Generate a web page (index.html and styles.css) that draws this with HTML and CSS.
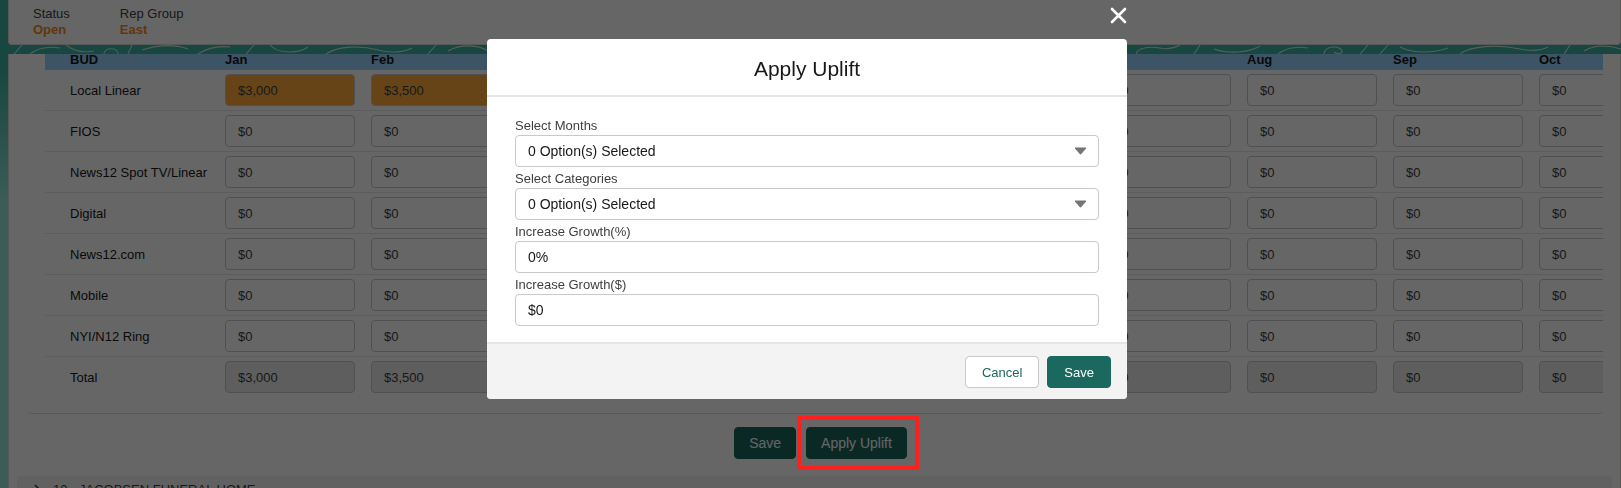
FILE: index.html
```html
<!DOCTYPE html>
<html>
    <head>
        <meta charset="utf-8">
        <link rel="stylesheet" href="styles.css">
    </head>
<body>
    <div class="recordHeader">
        <div class="headerField">
            <span class="fieldLabel">Status</span>
            <span class="fieldValue">Open</span>
        </div>
        <div class="headerField">
            <span class="fieldLabel">Rep Group</span>
            <span class="fieldValue">East</span>
        </div>
    </div>

    <div class="band">
        <svg width="1613" height="9" viewBox="0 0 1613 9">
            <g fill="none" stroke="#c6f1ea" stroke-width="1.1">
                <path d="M6 9 L14 0"/>
                <path d="M22 9 C30 3 40 1 52 3"/>
                <path d="M58 0 Q70 9 86 6"/>
                <path d="M96 9 C96 2 110 2 110 9"/>
                <path d="M120 9 L124 0"/>
                <path d="M134 5 C150 0 166 -1 180 4"/>
                <path d="M190 9 Q204 0 222 2"/>
                <path d="M238 9 L246 0"/>
                <path d="M262 0 C270 9 290 9 300 2"/>
                <path d="M318 9 C330 1 352 0 370 5 C380 8 395 8 404 3"/>
                <path d="M420 9 L428 0"/>
                <path d="M440 6 C452 -1 470 -1 482 7"/>
                <path d="M500 0 Q512 9 530 7"/>
                <path d="M546 9 C546 3 560 3 560 9"/>
                <path d="M578 9 L584 0"/>
                <path d="M600 3 C620 9 640 9 660 1"/>
                <path d="M676 9 Q690 -1 712 4"/>
                <path d="M730 9 L736 0"/>
                <path d="M752 0 C764 8 780 8 796 2"/>
                <path d="M812 9 C822 2 840 1 856 5"/>
                <path d="M870 9 C870 2 886 2 886 9"/>
                <path d="M904 9 L910 0"/>
                <path d="M926 5 C944 -1 962 0 980 6"/>
                <path d="M998 0 Q1010 9 1030 6"/>
                <path d="M1046 9 L1054 0"/>
                <path d="M1068 9 C1078 1 1096 0 1112 4"/>
                <path d="M1128 9 C1130 3 1140 1 1152 3 C1160 5 1168 2 1172 0"/>
                <path d="M1186 9 L1192 0"/>
                <path d="M1206 4 C1220 9 1240 8 1252 1"/>
                <path d="M1270 9 Q1282 0 1300 3"/>
                <path d="M1316 9 C1316 0 1334 0 1334 7 C1334 9 1328 9 1326 7"/>
                <path d="M1352 9 L1360 0"/>
                <path d="M1372 9 L1380 0"/>
                <path d="M1392 2 C1406 9 1426 8 1440 3"/>
                <path d="M1452 9 C1462 1 1490 -1 1512 4 C1522 6 1532 6 1540 2"/>
                <path d="M1556 9 L1562 0"/>
                <path d="M1576 6 C1586 0 1600 0 1613 4"/>
            </g>
        </svg>
    </div>

    <div class="mainCard">
        <div class="budgetSection">
            <div class="tableWindow">
                <div class="budgetTable">
                    <div class="row headRow">
                        <span class="rowLabel">BUD</span>
                        <span>Jan</span><span>Feb</span><span>Mar</span><span>Apr</span>
                        <span>May</span><span>Jun</span><span>Jul</span><span>Aug</span>
                        <span>Sep</span><span>Oct</span><span>Nov</span><span>Dec</span>
                    </div>
                    <div class="row">
                        <span class="rowLabel">Local Linear</span>
                        <input class="cell edited" value="$3,000">
                        <input class="cell edited" value="$3,500">
                        <input class="cell" value="$0"><input class="cell" value="$0">
                        <input class="cell" value="$0"><input class="cell" value="$0">
                        <input class="cell" value="$0"><input class="cell" value="$0">
                        <input class="cell" value="$0"><input class="cell" value="$0">
                        <input class="cell" value="$0"><input class="cell" value="$0">
                    </div>
                    <div class="row">
                        <span class="rowLabel">FIOS</span>
                        <input class="cell" value="$0"><input class="cell" value="$0">
                        <input class="cell" value="$0"><input class="cell" value="$0">
                        <input class="cell" value="$0"><input class="cell" value="$0">
                        <input class="cell" value="$0"><input class="cell" value="$0">
                        <input class="cell" value="$0"><input class="cell" value="$0">
                        <input class="cell" value="$0"><input class="cell" value="$0">
                    </div>
                    <div class="row">
                        <span class="rowLabel">News12 Spot TV/Linear</span>
                        <input class="cell" value="$0"><input class="cell" value="$0">
                        <input class="cell" value="$0"><input class="cell" value="$0">
                        <input class="cell" value="$0"><input class="cell" value="$0">
                        <input class="cell" value="$0"><input class="cell" value="$0">
                        <input class="cell" value="$0"><input class="cell" value="$0">
                        <input class="cell" value="$0"><input class="cell" value="$0">
                    </div>
                    <div class="row">
                        <span class="rowLabel">Digital</span>
                        <input class="cell" value="$0"><input class="cell" value="$0">
                        <input class="cell" value="$0"><input class="cell" value="$0">
                        <input class="cell" value="$0"><input class="cell" value="$0">
                        <input class="cell" value="$0"><input class="cell" value="$0">
                        <input class="cell" value="$0"><input class="cell" value="$0">
                        <input class="cell" value="$0"><input class="cell" value="$0">
                    </div>
                    <div class="row">
                        <span class="rowLabel">News12.com</span>
                        <input class="cell" value="$0"><input class="cell" value="$0">
                        <input class="cell" value="$0"><input class="cell" value="$0">
                        <input class="cell" value="$0"><input class="cell" value="$0">
                        <input class="cell" value="$0"><input class="cell" value="$0">
                        <input class="cell" value="$0"><input class="cell" value="$0">
                        <input class="cell" value="$0"><input class="cell" value="$0">
                    </div>
                    <div class="row">
                        <span class="rowLabel">Mobile</span>
                        <input class="cell" value="$0"><input class="cell" value="$0">
                        <input class="cell" value="$0"><input class="cell" value="$0">
                        <input class="cell" value="$0"><input class="cell" value="$0">
                        <input class="cell" value="$0"><input class="cell" value="$0">
                        <input class="cell" value="$0"><input class="cell" value="$0">
                        <input class="cell" value="$0"><input class="cell" value="$0">
                    </div>
                    <div class="row">
                        <span class="rowLabel">NYI/N12 Ring</span>
                        <input class="cell" value="$0"><input class="cell" value="$0">
                        <input class="cell" value="$0"><input class="cell" value="$0">
                        <input class="cell" value="$0"><input class="cell" value="$0">
                        <input class="cell" value="$0"><input class="cell" value="$0">
                        <input class="cell" value="$0"><input class="cell" value="$0">
                        <input class="cell" value="$0"><input class="cell" value="$0">
                    </div>
                    <div class="row totalRow">
                        <span class="rowLabel">Total</span>
                        <input class="cell" value="$3,000" disabled>
                        <input class="cell" value="$3,500" disabled>
                        <input class="cell" value="$0" disabled><input class="cell" value="$0" disabled>
                        <input class="cell" value="$0" disabled><input class="cell" value="$0" disabled>
                        <input class="cell" value="$0" disabled><input class="cell" value="$0" disabled>
                        <input class="cell" value="$0" disabled><input class="cell" value="$0" disabled>
                        <input class="cell" value="$0" disabled><input class="cell" value="$0" disabled>
                    </div>
                </div>
            </div>
        </div>

        <div class="pageActions">
            <button class="brandBtn">Save</button>
            <span class="highlight"><button class="brandBtn">Apply Uplift</button></span>
        </div>

        <div class="accountRow">
            <svg width="10" height="12" viewBox="0 0 10 12"><path d="M3 1 L8 6 L3 11" fill="none" stroke="#3e3e3e" stroke-width="1.6"/></svg>
            <span>10 - JACOBSEN FUNERAL HOME</span>
        </div>
    </div>

    <!-- modal -->
    <div class="backdrop"></div>
    <div class="modalWrap">
        <div class="modal">
            <button class="closeBtn">
                <svg width="17" height="17" viewBox="0 0 17 17"><path d="M2 2 L15 15 M15 2 L2 15" stroke="#fff" stroke-width="2.6" stroke-linecap="round"/></svg>
            </button>
            <div class="modalHeader">
                <h2>Apply Uplift</h2>
            </div>
            <div class="modalBody">
                <div class="formField">
                    <label>Select Months</label>
                    <div class="textInput combo">
                        <span>0 Option(s) Selected</span>
                        <svg width="13" height="8" viewBox="0 0 13 8"><path d="M1 1 H12 L6.5 7.2 Z" fill="#747474" stroke="#747474" stroke-linejoin="round"/></svg>
                    </div>
                </div>
                <div class="formField">
                    <label>Select Categories</label>
                    <div class="textInput combo">
                        <span>0 Option(s) Selected</span>
                        <svg width="13" height="8" viewBox="0 0 13 8"><path d="M1 1 H12 L6.5 7.2 Z" fill="#747474" stroke="#747474" stroke-linejoin="round"/></svg>
                    </div>
                </div>
                <div class="formField">
                    <label>Increase Growth(%)</label>
                    <input class="textInput" value="0%">
                </div>
                <div class="formField">
                    <label>Increase Growth($)</label>
                    <input class="textInput" value="$0">
                </div>
            </div>
            <div class="modalFooter">
                <button class="neutralBtn">Cancel</button>
                <button class="saveBtn">Save</button>
            </div>
        </div>
    </div>
</body>
</html>
```

FILE: styles.css
```css
* {
    box-sizing: border-box;
}

body {
    margin: 0;
    padding-left: 8px;
    height: 488px;
    overflow: hidden;
    font-family: "Liberation Sans", Arial, sans-serif;
    font-size: 13px;
    color: #3e3e3e;
    background: linear-gradient(180deg, #3eb0a2 0, #3eb0a2 70px, #94e6da 200px, #94e6da 100%);
}

/* record header */
.recordHeader {
    display: flex;
    gap: 50px;
    height: 45px;
    padding: 6px 24px 0;
    background: #fff;
    border: 1px solid #dddbda;
    border-top: none;
    border-radius: 0 0 4px 4px;
}

.headerField {
    display: flex;
    flex-direction: column;
    line-height: 16px;
}

.fieldValue {
    font-weight: bold;
    color: #f08a1c;
}

.band {
    height: 9px;
    overflow: hidden;
}

.band svg {
    display: block;
}

/* main card */
.mainCard {
    min-height: 500px;
    padding: 0 8px;
    background: #fff;
    border: 1px solid #dddbda;
    border-top: none;
}

.budgetSection {
    margin: 0 9px 0 11px;
    padding-bottom: 16px;
    border-bottom: 1px solid #dddbda;
    border-radius: 0 0 4px 4px;
}

.tableWindow {
    margin-left: 17px;
    overflow: hidden;
}

.budgetTable {
    width: max-content;
}

.row {
    display: grid;
    grid-template-columns: 164px repeat(12, 130px);
    column-gap: 16px;
    align-items: center;
    padding: 4px 0;
    border-bottom: 1px solid #e5e5e5;
}

.rowLabel {
    padding-left: 25px;
    color: #181818;
}

.headRow {
    height: 16px;
    padding: 0;
    align-items: start;
    line-height: 12px;
    font-weight: bold;
    color: #181818;
    background: #96d3ff;
    border-bottom: none;
}

.totalRow {
    border-bottom: none;
}

.cell {
    width: 130px;
    height: 32px;
    padding: 0 12px;
    font: inherit;
    color: #3e3e3e;
    background: #fff;
    border: 1px solid #c9c9c9;
    border-radius: 4px;
}

.cell.edited {
    background: #ffab3a;
}

.cell:disabled {
    background: #ecebea;
    color: #3e3e3e;
}

.pageActions {
    display: flex;
    justify-content: center;
    gap: 10px;
    padding: 13px 0 17px 12px;
}

.brandBtn {
    height: 32px;
    padding: 0 14px;
    font: 14px "Liberation Sans", Arial, sans-serif;
    color: #fff;
    background: #1a685e;
    border: 1px solid #1a685e;
    border-radius: 4px;
}

.highlight {
    position: relative;
    display: inline-flex;
}

.highlight::after {
    content: "";
    position: absolute;
    top: -11px;
    right: -12px;
    bottom: -11px;
    left: -9px;
    border: 4px solid #ff1f1f;
    z-index: 30;
}

.accountRow {
    display: flex;
    align-items: center;
    gap: 11px;
    padding: 5px 15px;
    line-height: 18px;
    background: #f3f3f3;
    border-radius: 4px 4px 0 0;
}

/* modal */
.backdrop {
    position: fixed;
    inset: 0;
    background: rgba(0, 0, 0, 0.6);
    z-index: 20;
}

.modalWrap {
    position: fixed;
    inset: 0;
    z-index: 25;
    display: flex;
    justify-content: center;
    align-items: flex-start;
    padding: 39px 7px 0 0;
}

.modal {
    position: relative;
    width: 640px;
    background: #fff;
    border-radius: 4px;
}

.closeBtn {
    position: absolute;
    top: -32px;
    right: 0;
    width: 17px;
    height: 17px;
    padding: 0;
    border: none;
    background: none;
}

.closeBtn svg {
    display: block;
}

.modalHeader {
    padding: 17px 16px 14px;
    text-align: center;
    border-bottom: 2px solid #e5e5e5;
}

.modalHeader h2 {
    margin: 0;
    font-size: 21px;
    font-weight: normal;
    line-height: 25px;
    color: #181818;
}

.modalBody {
    padding: 19px 28px 14px;
}

.formField {
    margin-bottom: 2px;
}

.formField label {
    display: block;
    line-height: 19px;
    color: #3e3e3e;
}

.textInput {
    display: flex;
    align-items: center;
    justify-content: space-between;
    width: 100%;
    height: 32px;
    padding: 0 11px 0 12px;
    font: 14px "Liberation Sans", Arial, sans-serif;
    color: #181818;
    background: #fff;
    border: 1px solid #c9c9c9;
    border-radius: 4px;
}

.modalFooter {
    display: flex;
    justify-content: flex-end;
    gap: 8px;
    padding: 12px 16px 11px;
    background: #f3f3f3;
    border-top: 2px solid #e5e5e5;
    border-radius: 0 0 4px 4px;
}

.neutralBtn,
.saveBtn {
    height: 32px;
    padding: 0 16px;
    font: 13px "Liberation Sans", Arial, sans-serif;
    border-radius: 4px;
}

.neutralBtn {
    color: #1a685e;
    background: #fff;
    border: 1px solid #c9c9c9;
}

.saveBtn {
    color: #fff;
    background: #1a685e;
    border: 1px solid #1a685e;
}
```
